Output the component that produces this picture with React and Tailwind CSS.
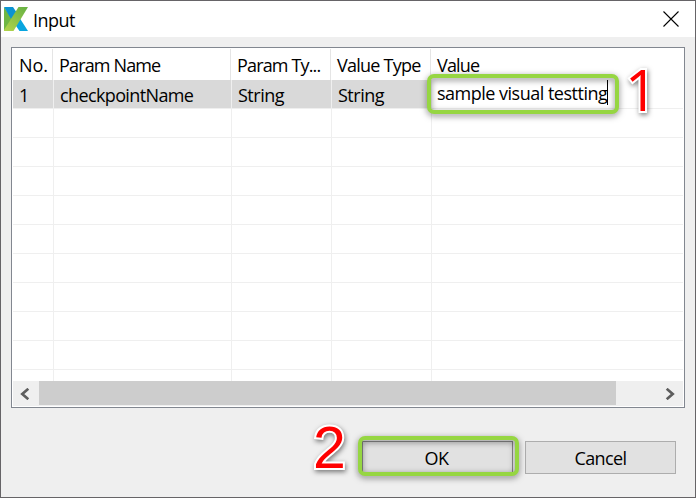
import React from 'react';

const columns = [
  { label: 'No.', value: '1', width: 'w-10', head: 'tracking-[-0.1px]', cell: 'tracking-[0px]' },
  { label: 'Param Name', value: 'checkpointName', width: 'w-[178px]', head: 'tracking-[-0.85px]', cell: 'tracking-[-0.62px]' },
  { label: 'Param Ty...', value: 'String', width: 'w-[100px]', head: 'tracking-[-0.85px]', cell: 'tracking-[-0.5px]' },
  { label: 'Value Type', value: 'String', width: 'w-[100px]', head: 'tracking-[-0.75px]', cell: 'tracking-[-0.5px]' },
  { label: 'Value', value: '', width: 'flex-1', head: 'tracking-[-0.85px]', cell: '' },
];

const emptyRows = [0, 1, 2, 3, 4, 5, 6, 7, 8, 9];

function Logo() {
  return (
    <svg width="24" height="24" viewBox="0 0 24 24">
      <defs>
        <linearGradient id="band" gradientUnits="userSpaceOnUse" x1="20" y1="0" x2="4" y2="24">
          <stop offset="0" stopColor="#6ab344" />
          <stop offset="1" stopColor="#b0d24a" />
        </linearGradient>
      </defs>
      <path d="M15 10l9 14h-8.500l-5.500-8z" fill="#08a5df" />
      <path d="M0 0l12 17L0 24z" fill="#6fb643" />
      <path d="M0 0h9l6 9-5 8z" fill="#0b93d2" />
      <path d="M14.500 0H24L9.500 24H0v-1z" fill="url(#band)" />
    </svg>
  );
}

function Chevron({ flip }) {
  return (
    <svg width="10" height="12" viewBox="0 0 10 12" className={flip ? 'rotate-180' : ''}>
      <path d="M8.3 .8L2.3 6l6 5.2" fill="none" stroke="#5d5d5d" strokeWidth="2.7" />
    </svg>
  );
}

function Callout({ text, className }) {
  return (
    <span
      className={`absolute leading-[60px] text-[#ff0000] [paint-order:stroke_fill] [-webkit-text-stroke:4px_white] [filter:drop-shadow(1px_2px_2.5px_rgba(0,0,0,.5))] ${className}`}
    >
      {text}
    </span>
  );
}

function Highlight({ className }) {
  return (
    <div
      className={`pointer-events-none absolute rounded-[7px] border-4 border-[#96d642] [filter:drop-shadow(0_2px_3px_rgba(0,0,0,.5))] ${className}`}
    />
  );
}

export default function App() {
  return (
    <div className="relative flex h-[498px] w-[696px] flex-col overflow-hidden border border-[#666467] bg-[#efefef] font-['Open_Sans','Noto_Sans',sans-serif] text-[18px] leading-[28px] text-black">
      <header className="flex h-9 shrink-0 items-center bg-white pl-[3px] pr-4">
        <Logo />
        <span className="ml-[5px] mt-px tracking-[-0.5px]">Input</span>
        <svg className="ml-auto" width="16" height="16" viewBox="0 0 16 16">
          <path d="M.5 .5l15 15M15.5 .5l-15 15" stroke="#000" strokeWidth="1.1" />
        </svg>
      </header>

      <main className="mx-2.5 mt-2.5 flex h-[361px] shrink-0 flex-col border border-[#828790] bg-white p-px">
        <div className="-ml-px flex h-[31px] shrink-0 pl-px">
          {columns.map((c, i) => (
            <div
              key={c.label}
              className={`flex items-center whitespace-nowrap border-[#e5e5e5] pl-1.5 pt-px ${i < 4 ? 'border-r' : ''} ${c.head} ${c.width}`}
            >
              {c.label}
            </div>
          ))}
        </div>
        <div className="flex h-[29px] shrink-0 border-b border-[#efefef]">
          {columns.map((c, i) => (
            <div
              key={c.label}
              className={`flex items-center whitespace-nowrap pl-1.5 ${i < 4 ? 'bg-[#d9d9d9] pt-px' : 'bg-white'} ${c.cell} ${i === 0 ? 'w-[41px]' : c.width} ${i < 4 ? 'border-r border-[#efefef]' : ''}`}
            >
              {i < 4 ? (
                c.value
              ) : (
                <span className="-ml-px flex items-center tracking-[-0.5px]">
                  <span className="-mt-0.5">sample visual testting</span>
                  <i className="-mt-1 h-[25px] w-px bg-black" />
                </span>
              )}
            </div>
          ))}
        </div>
        <div className="h-[272px] shrink-0 overflow-hidden">
          {emptyRows.map((r) => (
            <div key={r} className="flex h-[29px] border-b border-[#efefef]">
              {columns.map((c, i) => (
                <div
                  key={c.label}
                  className={`${i === 0 ? 'w-[41px]' : c.width} ${i < 4 ? 'border-r border-[#efefef]' : ''}`}
                />
              ))}
            </div>
          ))}
        </div>
        <div className="flex h-[25px] shrink-0 bg-[#efefef]">
          <div className="flex w-[26px] items-center pl-[7px]">
            <Chevron />
          </div>
          <div className="h-6 w-[577px] bg-[#cdcdcd]" />
          <div className="flex flex-1 items-center justify-end pr-2">
            <Chevron flip />
          </div>
        </div>
      </main>

      <footer className="mr-[19px] mt-[33px] flex justify-end gap-3">
        <button className="h-[33px] w-[151px] border border-[#8b8b8b] bg-[#e1e1e1] pr-0.5 pt-px tracking-[-0.5px]">OK</button>
        <button className="h-[33px] w-[151px] border border-[#adadad] bg-[#e1e1e1] pt-px tracking-[-0.6px]">Cancel</button>
      </footer>

      <Highlight className="left-[426px] top-[73px] h-10 w-48" />
      <Highlight className="left-[357px] top-[435px] h-10 w-[161px]" />
      <Callout text="1" className="left-[624px] top-[58px] font-['Open_Sans',sans-serif] text-[57px] font-medium" />
      <Callout text="2" className="left-[312px] top-[417px] font-['Liberation_Sans',sans-serif] text-[59px]" />
    </div>
  );
}
